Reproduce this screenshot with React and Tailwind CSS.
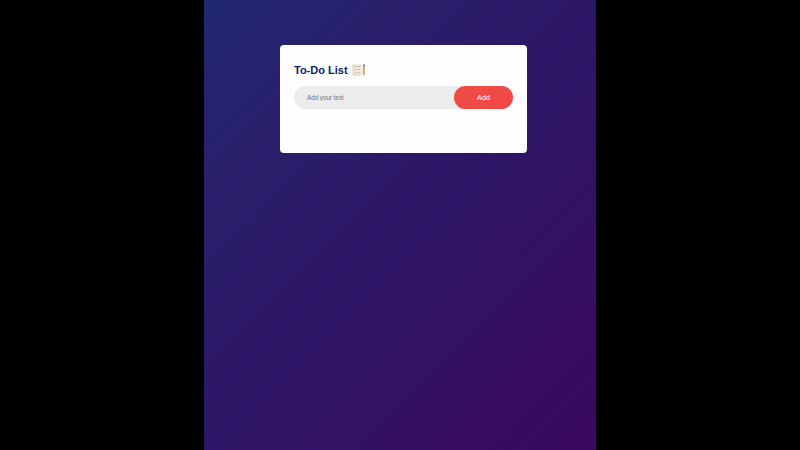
function NotebookIcon() {
  return (
    <svg className="ml-1 h-3 w-3.5 shrink-0" viewBox="0 0 14 12" aria-hidden="true">
      <rect x="0.7" y="0.4" width="8.8" height="11.3" rx="0.7" fill="#f5d0c9" />
      <rect x="1.8" y="1.2" width="7.2" height="9.4" fill="#f4e7dc" />
      <path d="M0 2h1.5M0 4.5h1.5M0 7h1.5M0 9.5h1.5" stroke="#e5bcb6" strokeWidth="0.6" />
      <path d="M2.6 2.5h1.6M2.6 8.8h1.6" stroke="#9fd48a" strokeWidth="1.3" />
      <path d="M2.6 5.6h1.6" stroke="#afd48a" strokeWidth="1.3" />
      <path d="M5.2 2.5h3M5.2 5.6h3M5.2 8.8h3" stroke="#c0a5a0" strokeWidth="0.8" />
      <path d="M11.2 1.8h1.6v7.6l-.8 2-.8-2z" fill="#e2a95c" />
      <path d="M11.6 2v7.4" stroke="#6ba39a" strokeWidth="0.8" />
      <path d="M11.2 2V.8q.8-.9 1.6 0V2z" fill="#3d5185" />
      <path d="M11.5 10h1l-.5 1.5z" fill="#57515b" />
    </svg>
  );
}

export default function App() {
  return (
    <div className="flex h-screen w-full justify-center overflow-hidden bg-black font-['Liberation_Sans',Arial,sans-serif]">
      <main className="h-full w-[392px] bg-[linear-gradient(135deg,#20286f_0%,#29206c_22%,#2d1868_45%,#331165_70%,#3b0860_100%)] pl-[76px] pt-[45px]">
        <section className="h-[108px] w-[247px] rounded-[4px] bg-[#fffdff] px-3.5 pt-[18px]">
          <h1 className="flex h-[14px] items-center whitespace-nowrap text-[11px] font-bold leading-[14px] text-[#0a2463]">
            To-Do List
            <NotebookIcon />
          </h1>
          <form className="mt-[9px] flex h-[23px] w-[219px] items-center rounded-full bg-[#eaecee]" onSubmit={(e) => e.preventDefault()}>
            <input
              className="h-full min-w-0 flex-1 bg-transparent pl-[13px] text-[6.5px] tracking-[-0.14px] text-[#777] outline-none placeholder:text-[#777]"
              placeholder="Add your text"
            />
            <button className="h-full w-[59px] rounded-full bg-[#ef4a46] pt-px text-[7.2px] text-white">Add</button>
          </form>
        </section>
      </main>
    </div>
  );
}
